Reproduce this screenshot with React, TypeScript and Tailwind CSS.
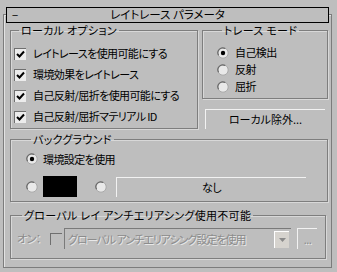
import React from 'react';

const Check = ({ checked = true, disabled = false }: { checked?: boolean; disabled?: boolean }) => (
  <span
    className={`shrink-0 flex items-center justify-center w-[12px] h-[12px] border-t border-l border-[#6f6f6f] border-r-white border-b-white ${
      disabled ? 'bg-[#bebebe]' : 'bg-[#ececec]'
    }`}
  >
    {checked && (
      <svg width="9" height="9" viewBox="0 0 9 9">
        <path d="M1 4 L3.5 6.5 L8 1.5" fill="none" stroke="#000" strokeWidth="2" />
      </svg>
    )}
  </span>
);

const Radio = ({ on = false }: { on?: boolean }) => (
  <svg width="12" height="12" viewBox="0 0 12 12" className="shrink-0">
    <circle cx="6" cy="6" r="5.2" fill="#e9e9e9" stroke="#a8a8a8" strokeWidth="1" />
    <path d="M1.6 8.2 A4.8 4.8 0 0 1 8.2 1.6" fill="none" stroke="#6a6a6a" strokeWidth="1.2" />
    {on && <circle cx="6" cy="6" r="2.2" fill="#000" />}
  </svg>
);

const Group = ({ title, className, children }: { title: string; className: string; children: React.ReactNode }) => (
  <fieldset
    className={`border border-[#7e7e7e] shadow-[inset_1px_1px_0_#d8d8d8,1px_1px_0_#d8d8d8] ${className}`}
  >
    <legend className="ml-[5px] px-[2px] h-[14px] leading-[14px] tracking-[0.3px]">{title}</legend>
    {children}
  </fieldset>
);

const Button = ({ label, className }: { label: string; className: string }) => (
  <div
    className={`flex items-center justify-center border-t border-l border-[#f2f2f2] border-r-[#6f6f6f] border-b-[#6f6f6f] ${className}`}
  >
    {label}
  </div>
);

export default function App() {
  const localOptions = [
    'レイトレースを使用可能にする',
    '環境効果をレイトレース',
    '自己反射/屈折を使用可能にする',
    '自己反射/屈折マテリアル ID',
  ];
  const modes = ['自己検出', '反射', '屈折'];

  return (
    <div className="w-[337px] h-[272px] bg-[#bebebe] text-black text-[11px] tracking-[-0.6px] font-['Noto_Sans_CJK_JP',sans-serif] [font-feature-settings:'palt'] pt-[14px] pl-[3px] overflow-hidden">
      <div className="w-[329px] h-[254px] border border-[#7c7c7c] shadow-[inset_1px_1px_0_#e2e2e2]">
        {/* rollout header */}
        <div className="-mt-[8px] mx-[2px] h-[16px] border border-black bg-[#bebebe] flex items-center relative">
          <span className="ml-[5px] leading-none">−</span>
          <span className="absolute inset-0 flex items-center justify-center leading-none text-[11.5px] tracking-normal">レイトレース パラメータ</span>
        </div>

        <div className="pl-[6px] pr-[3px]">
          <div className="flex gap-[4px]">
            <Group title="ローカル オプション" className="w-[188px] h-[106px] pl-[3px]">
              <div className="pt-[6px] flex flex-col">
                {localOptions.map((t) => (
                  <div key={t} className="flex items-center h-[21px]">
                    <Check />
                    <span className="ml-[7px]">{t}</span>
                  </div>
                ))}
              </div>
            </Group>

            <div className="flex-1 flex flex-col">
              <Group title="トレース モード" className="h-[76px] pl-[14px]">
                <div className="pt-[7px] flex flex-col">
                  {modes.map((m, i) => (
                    <div key={m} className="flex items-center h-[17px]">
                      <Radio on={i === 0} />
                      <span className="ml-[6px]">{m}</span>
                    </div>
                  ))}
                </div>
              </Group>
              <Button label="ローカル除外..." className="mt-[10px] mx-[3px] h-[20px] tracking-normal" />
            </div>
          </div>

          <Group title="バックグラウンド" className="mt-[3px] h-[70px] pl-[15px]">
            <div className="pt-[5px] flex flex-col">
              <div className="flex items-center h-[16px]">
                <Radio on />
                <span className="ml-[5px]">環境設定を使用</span>
              </div>
              <div className="flex items-center mt-[9px] h-[21px]">
                <Radio />
                <div className="ml-[5px] w-[34px] h-[21px] bg-black" />
                <span className="ml-[18px]">
                  <Radio />
                </span>
                <Button label="なし" className="ml-[9px] w-[190px] h-[20px]" />
              </div>
            </div>
          </Group>

          <Group title="グローバル レイ アンチエリアシング使用不可能" className="mt-[6px] w-[316px] h-[51px] pl-[6px]">
            <div className="pt-[6px] flex items-center text-[#8c8c8c] [text-shadow:1px_1px_0_#e8e8e8]">
              <span className="w-[33px]">オン：</span>
              <Check checked={false} disabled />
              <div className="ml-[2px] w-[227px] h-[21px] border-t border-l border-[#7a7a7a] border-r-[#e8e8e8] border-b-[#e8e8e8] flex items-center pl-[3px]">
                <span className="flex-1 whitespace-nowrap overflow-hidden tracking-[-1px]">グローバル アンチエリアシング設定を使用</span>
                <span className="shrink-0 w-[15px] h-[17px] mr-[2px] bg-[#d6d3ce] border-t border-l border-white border-r-[#6f6f6f] border-b-[#6f6f6f] flex items-center justify-center">
                  <svg width="7" height="4" viewBox="0 0 7 4">
                    <path d="M0 0 H7 L3.5 4 Z" fill="#8a8a8a" />
                  </svg>
                </span>
              </div>
              <Button label="..." className="ml-[6px] w-[20px] h-[21px] text-[#8c8c8c]" />
            </div>
          </Group>
        </div>
      </div>
    </div>
  );
}
